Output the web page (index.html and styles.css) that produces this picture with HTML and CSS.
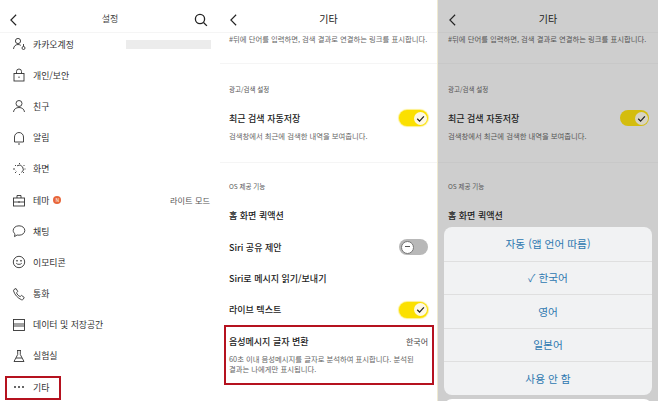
FILE: index.html
```html
<!DOCTYPE html>
<html lang="ko">
<head>
<meta charset="utf-8">
<title>설정</title>
<link rel="stylesheet" href="styles.css">
</head>
<body>
<div class="screens">
  <section class="phone phone-left">
    <header class="bar">
      <svg class="back" viewBox="0 0 10 16"><path d="M8 2 2 8l6 6"/></svg>
      <h1 class="bar-title small">설정</h1>
      <svg class="search" viewBox="0 0 14 14"><circle cx="6" cy="6" r="4.6"/><path d="m9.500 9.500 3.400 3.400"/></svg>
    </header>
    <ul class="menu">
      <li class="menu-row"><svg class="ico" viewBox="0 0 14 14"><circle cx="6" cy="4" r="2.600"/><path d="M1.500 12c.3-3 2.200-4.500 4.500-4.500 1.200 0 2 .3 2.800.9"/><circle cx="11.500" cy="11" r="1.500"/><path d="M11.500 9.500V7"/></svg><span>카카오계정</span><i class="blur-value"></i></li>
      <li class="menu-row"><svg class="ico" viewBox="0 0 14 14"><rect x="2" y="5.500" width="10" height="7.500"/><path d="M4.500 5.500V3.500a2.500 2.500 0 0 1 5 0v2"/><path d="M7 8.500v1.500"/></svg><span>개인/보안</span></li>
      <li class="menu-row"><svg class="ico" viewBox="0 0 14 14"><circle cx="7" cy="4.500" r="3"/><path d="M1.500 13c.4-3 2.600-4.500 5.500-4.500s5.100 1.500 5.500 4.500"/></svg><span>친구</span></li>
      <li class="menu-row"><svg class="ico" viewBox="0 0 14 14"><path d="M2.500 11V6a4.500 4.500 0 0 1 9 0v5z"/><path d="M6 13h2"/></svg><span>알림</span></li>
      <li class="menu-row"><svg class="ico" viewBox="0 0 14 14"><path d="M5 3.800A3.800 3.800 0 1 1 9.500 10.500" /><path d="M7.500 1v1M12.500 3l-1 1M13.500 7h-1M12 11l-1-1M7.500 13v-1M3 11l1-1M1 7h2M3 3l1 1M3.800 8.800l.6.6"/></svg><span>화면</span></li>
      <li class="menu-row"><svg class="ico" viewBox="0 0 14 14"><rect x="1.500" y="5" width="11" height="8"/><path d="M5 5V2.500h4V5M1.500 9h11M7 8v2"/></svg><span>테마</span><b class="new-badge">N</b><em class="menu-value">라이트 모드</em></li>
      <li class="menu-row"><svg class="ico" viewBox="0 0 14 14"><path d="M7 1.800c3.300 0 5.800 2 5.800 4.700S10.300 11.200 7 11.200c-.7 0-1.300-.1-1.900-.2L2.500 12.600l.5-2.700C1.900 9 1.200 7.800 1.200 6.500 1.200 3.800 3.700 1.800 7 1.800z"/></svg><span>채팅</span></li>
      <li class="menu-row"><svg class="ico" viewBox="0 0 14 14"><circle cx="7" cy="7" r="5.700"/><circle cx="5" cy="5.800" r=".5"/><circle cx="9" cy="5.800" r=".5"/><path d="M4.300 8.300c.7 1.400 4.700 1.400 5.400 0"/></svg><span>이모티콘</span></li>
      <li class="menu-row"><svg class="ico" viewBox="0 0 14 14"><path d="M2 2.500 4 1.500l1.800 3-1.300 1.200c.5 1.600 1.900 3.200 3.700 3.900l1.300-1.200 2.700 2-1 1.900c-.4.500-1 .6-1.600.5C6 11.300 2.500 7.600 1.600 4c-.1-.6 0-1.100.4-1.500z"/></svg><span>통화</span></li>
      <li class="menu-row"><svg class="ico" viewBox="0 0 14 14"><rect x="1.500" y="1.500" width="11" height="4.500"/><rect x="1.500" y="8" width="11" height="4.500"/><path d="M1.500 6v2M12.500 6v2"/></svg><span>데이터 및 저장공간</span></li>
      <li class="menu-row"><svg class="ico" viewBox="0 0 14 14"><path d="M5 1.500h4M5.700 1.500v4L2 12.500h10L8.300 5.500v-4M4 9h6"/></svg><span>실험실</span></li>
      <li class="menu-row"><span class="dots"><i></i><i></i><i></i></span><span>기타</span></li>
    </ul>
    <div class="outline outline-menu"></div>
  </section>

  <section class="phone phone-mid">
    <header class="bar">
      <svg class="back" viewBox="0 0 10 16"><path d="M8 2 2 8l6 6"/></svg>
      <h1 class="bar-title">기타</h1>
    </header>
    <div class="settings">
      <p class="desc desc-top">#뒤에 단어를 입력하면, 검색 결과로 연결하는 링크를 표시합니다.</p>
      <div class="group group-ad">
        <h2 class="label">광고/검색 설정</h2>
        <div class="set-row"><strong>최근 검색 자동저장</strong><span class="toggle on"><svg viewBox="0 0 10 10"><path d="m2.500 5.200 1.800 1.800 3.300-3.600"/></svg></span></div>
        <p class="desc">검색창에서 최근에 검색한 내역을 보여줍니다.</p>
      </div>
      <div class="group group-os">
        <h2 class="label">OS 제공 기능</h2>
        <div class="set-row first-os"><strong>홈 화면 퀵액션</strong></div>
        <div class="set-row"><strong>Siri 공유 제안</strong><span class="toggle off"><i></i></span></div>
        <div class="set-row"><strong>Siri로 메시지 읽기/보내기</strong></div>
        <div class="set-row"><strong>라이브 텍스트</strong><span class="toggle on"><svg viewBox="0 0 10 10"><path d="m2.500 5.200 1.800 1.800 3.300-3.600"/></svg></span></div>
        <div class="set-row voice"><strong>음성메시지 글자 변환</strong><em>한국어</em></div>
        <p class="desc voice-desc">60초 이내 음성메시지를 글자로 분석하여 표시합니다. 분석된<br>결과는 나에게만 표시됩니다.</p>
      </div>
    </div>
    <div class="outline outline-voice"></div>
  </section>

  <section class="phone phone-dim">
    <header class="bar">
      <svg class="back" viewBox="0 0 10 16"><path d="M8 2 2 8l6 6"/></svg>
      <h1 class="bar-title">기타</h1>
    </header>
    <div class="settings">
      <p class="desc desc-top">#뒤에 단어를 입력하면, 검색 결과로 연결하는 링크를 표시합니다.</p>
      <div class="group group-ad">
        <h2 class="label">광고/검색 설정</h2>
        <div class="set-row"><strong>최근 검색 자동저장</strong><span class="toggle on"><svg viewBox="0 0 10 10"><path d="m2.500 5.200 1.800 1.800 3.300-3.600"/></svg></span></div>
        <p class="desc">검색창에서 최근에 검색한 내역을 보여줍니다.</p>
      </div>
      <div class="group group-os">
        <h2 class="label">OS 제공 기능</h2>
        <div class="set-row first-os"><strong>홈 화면 퀵액션</strong></div>
      </div>
    </div>
    <div class="sheet">
      <div class="sheet-row">자동 (앱 언어 따름)</div>
      <div class="sheet-row">✓ 한국어</div>
      <div class="sheet-row">영어</div>
      <div class="sheet-row">일본어</div>
      <div class="sheet-row">사용 안 함</div>
    </div>
    <div class="cancel"></div>
  </section>
</div>
</body>
</html>
```
FILE: styles.css
```css
* { box-sizing: border-box; }
html, body { margin: 0; padding: 0; background: #fff; }
body { width: 658px; height: 401px; overflow: hidden; font-family: "Noto Sans CJK KR", "Noto Sans", sans-serif; color: #222; }
h1, h2, p, ul { margin: 0; padding: 0; font-weight: 400; }
em { font-style: normal; }
.screens { display: flex; height: 401px; }
.phone { position: relative; height: 401px; overflow: hidden; background: #fff; }
.phone-left { width: 220px; }
.phone-mid { width: 218px; border-right: 1px solid #f0ead0; }
.phone-dim { width: 220px; background: #cecece; }

.bar { position: relative; z-index: 1; height: 33px; display: flex; align-items: center; justify-content: center; background: inherit; border-bottom: 1px solid #f5f5f5; }
.phone-dim .bar { border-bottom-color: #c8c8c8; }
.back { position: absolute; left: 9px; top: 13px; width: 9px; height: 14px; fill: none; stroke: #222; stroke-width: 1.300; }
.phone-dim .back { left: 10px; }
.search { position: absolute; right: 12px; top: 13px; width: 14px; height: 14px; fill: none; stroke: #222; stroke-width: 1.300; }
.bar-title { font-size: 10px; line-height: 14px; margin-top: 5px; color: #222; }
.bar-title.small { font-size: 9px; color: #444; }

.menu { list-style: none; margin-top: -4.500px; }
.menu-row { height: 31.200px; display: flex; align-items: center; padding-left: 12px; padding-right: 10px; font-size: 8.900px; color: #333; }
.ico { width: 14px; height: 14px; margin-right: 7px; flex: none; fill: none; stroke: #333; stroke-width: .9; }
.blur-value { margin-left: auto; width: 85px; height: 9px; background: #ececec; margin-right: -1px; }
.new-badge { width: 8px; height: 8px; border-radius: 50%; background: #e8663a; color: #fff; font-size: 5px; line-height: 8px; text-align: center; margin-left: 4px; font-weight: 400; }
.menu-value { margin-left: auto; font-size: 8.200px; color: #555; }
.dots { width: 14px; margin-right: 7px; display: flex; justify-content: center; gap: 1.500px; }
.dots i { width: 2.500px; height: 2.500px; border-radius: 50%; background: #333; }

.outline { position: absolute; border: 2px solid #b5121f; }
.outline-menu { left: 5px; top: 376px; width: 56px; height: 24px; }
.outline-voice { left: 4px; top: 325px; width: 210px; height: 60px; }

.settings { margin-top: -1px; padding: 0 8px 0 9px; }
.phone-dim .settings { padding-left: 10px; }
.desc { font-size: 7.350px; line-height: 10px; color: #666; white-space: nowrap; }
.desc-top { padding-top: 2px; height: 31px; }
.group { border-top: 1px solid #f5f5f5; margin: 0 -8px 0 -9px; padding: 0 8px 0 9px; }
.phone-dim .group { margin-left: -10px; padding-left: 10px; border-top-color: #c8c8c8; }
.group-ad { height: 99px; padding-top: 20px; }
.label { font-size: 6.500px; line-height: 10px; color: #555; margin-bottom: 16px; }
.set-row { display: flex; align-items: center; justify-content: space-between; min-height: 16px; font-size: 9px; color: #222; }
.set-row strong { font-weight: 500; }
.set-row em { font-size: 8px; color: #444; margin-right: 1px; }
.group-ad .desc { margin-top: 5px; }
.group-os { padding-top: 18px; }
.group-os .set-row { height: 31.400px; }
.group-os .label { margin-bottom: 9px; }
.voice-desc { margin-top: -3px; }
.toggle { display: block; position: relative; width: 29px; height: 16px; border-radius: 8px; flex: none; margin-right: 1px; }
.toggle.on { background: #fbe000; box-shadow: 0 0 1px 1px #fdf08a; }
.toggle.off { background: #b8b8b8; }
.toggle.on svg { position: absolute; right: 1.500px; top: 1.500px; width: 13px; height: 13px; background: #fdf8e4; border-radius: 50%; fill: none; stroke: #222; stroke-width: 1; }
.toggle.off i { position: absolute; left: 1.500px; top: 1.500px; width: 13px; height: 13px; border-radius: 50%; background: #fff; border: 1px solid #777; }
.toggle.off i::after { content: ""; position: absolute; left: 3px; top: 4.500px; width: 5px; height: 1px; background: #555; }
.phone-dim .toggle.on { background: #d4bd0e; box-shadow: none; }
.phone-dim .toggle.on svg { background: #d8d4c4; }
.phone-dim .desc { color: #555; }

.sheet { position: absolute; left: 6px; top: 227px; width: 208px; height: 168px; background: #f1f2f3; border-radius: 8px; }
.sheet-row { height: 33.500px; display: flex; align-items: center; justify-content: center; font-size: 10.700px; color: #2e78b0; border-top: 1px solid #dfdfdf; }
.sheet-row:first-child { border-top: 0; }
.cancel { position: absolute; left: 6px; top: 399px; width: 208px; height: 30px; background: #fff; border-radius: 8px; }
```
